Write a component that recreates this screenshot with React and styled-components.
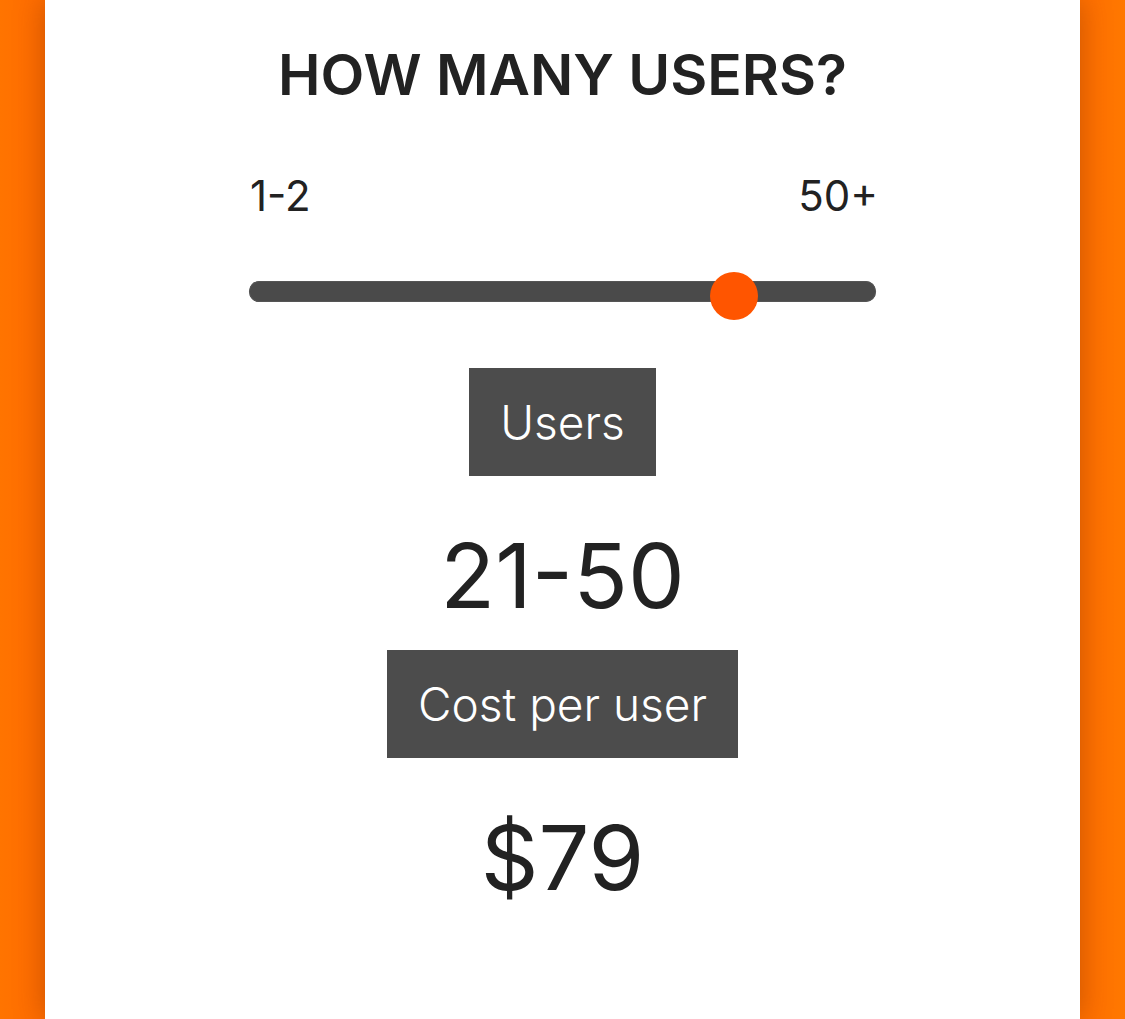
import React from 'react'
import styled, { createGlobalStyle } from 'styled-components'

const GlobalStyle = createGlobalStyle`
    html, body {
        margin: 0;
        padding: 0;
        height: 100%;
    }
    body {
        background: #ff7100;
        font-family: Inter, "Noto Sans", sans-serif;
        color: #222;
    }
`;

const Page = styled.div`
    height: 1019px;
    padding: 0 45px;
    background: linear-gradient(90deg, #ff7400 0%, #ff6e00 3%, #ff7100 97%, #ff7800 100%);
    box-sizing: border-box;
`;

const Card = styled.div`
    height: 100%;
    background: #fff;
    box-shadow: 0 0 28px rgba(120, 40, 0, 0.4);
    display: flex;
    flex-direction: column;
    align-items: center;
`;

const Title = styled.h1`
    margin: 40px 0 0;
    font-size: 57px;
    line-height: 70px;
    font-weight: 600;
    color: #222;
`;

const SliderBlock = styled.div`
    width: 627px;
    margin-top: 61px;
`;

const Labels = styled.div`
    display: flex;
    justify-content: space-between;
    font-size: 42px;
    line-height: 50px;
    padding: 0 0 0 1px;
    margin-right: -2px;
`;

const Track = styled.div`
    position: relative;
    margin-top: 60px;
    height: 21px;
    border-radius: 11px;
    background: #4a4a4a;
    box-shadow: inset 0 0 0 1px #555;
`;

const Thumb = styled.div`
    position: absolute;
    top: -9px;
    width: 48px;
    height: 48px;
    margin-left: -24px;
    border-radius: 50%;
    background: #ff5500;
`;

const Tag = styled.div`
    margin-top: ${p => p.$top}px;
    background: #4c4c4c;
    color: #fff;
    font-size: 46px;
    font-weight: 300;
    line-height: 108px;
    padding: 0 31px;
`;

const Value = styled.div`
    margin-top: ${p => p.$top}px;
    font-size: 90px;
    line-height: 109px;
    font-weight: 400;
    color: #222;
`;

export default function App() {
    const value = 0.773;
    return (
        <>
            <GlobalStyle />
            <Page>
                <Card>
                    <Title>HOW MANY USERS?</Title>
                    <SliderBlock>
                        <Labels>
                            <span>1-2</span>
                            <span>50+</span>
                        </Labels>
                        <Track>
                            <Thumb style={{ left: `${value * 100}%` }} />
                        </Track>
                    </SliderBlock>
                    <Tag $top={66}>Users</Tag>
                    <Value $top={45}>21-50</Value>
                    <Tag $top={20}>Cost per user</Tag>
                    <Value $top={45}>$79</Value>
                </Card>
            </Page>
        </>
    )
}
